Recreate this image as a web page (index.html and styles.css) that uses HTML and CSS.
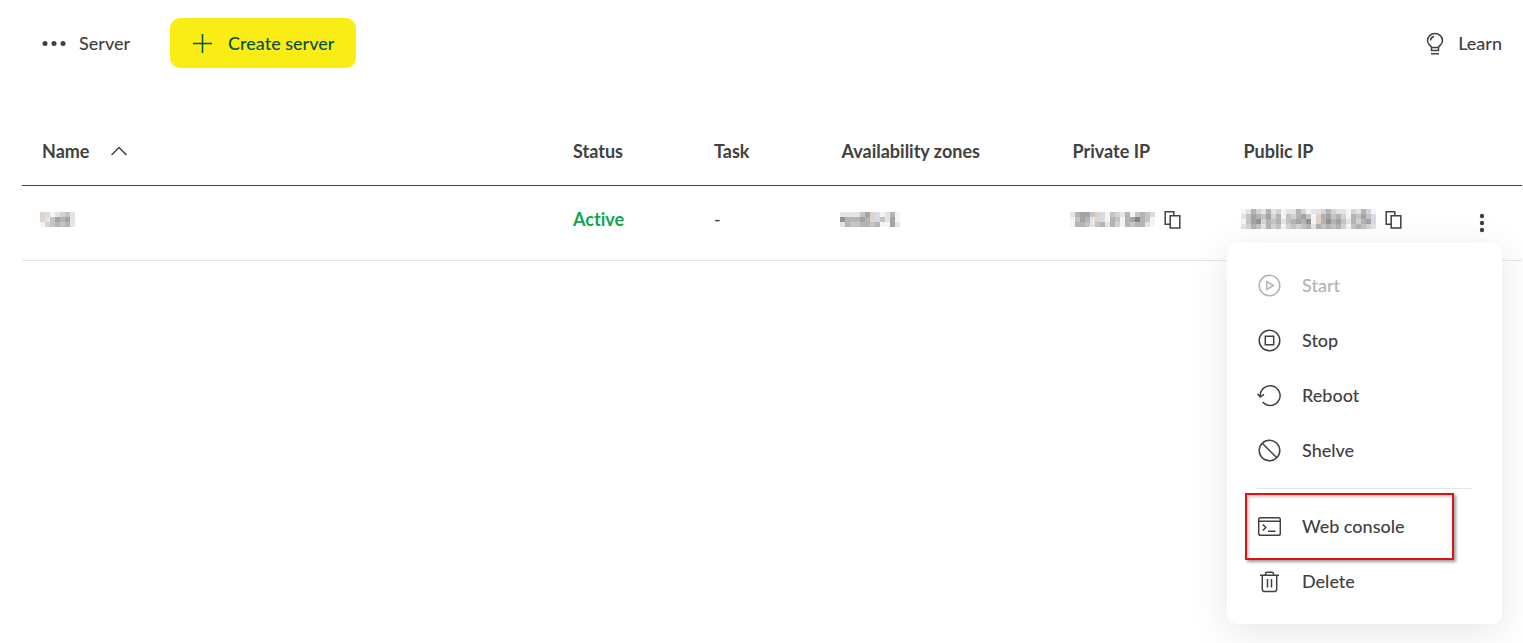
FILE: index.html
```html
<!DOCTYPE html>
<html lang="en">
<head>
	<meta charset="UTF-8">
	<title>Server</title>
	<link rel="stylesheet" href="styles.css">
</head>
<body>
	<header class="toolbar">
		<button type="button" class="crumb">
			<svg class="icon" width="24" height="24" viewBox="0 0 24 24"><g fill="currentColor" stroke="none"><circle cx="3" cy="12.500" r="2.5"/><circle cx="12" cy="12.500" r="2.5"/><circle cx="21" cy="12.500" r="2.5"/></g></svg>
			Server
		</button>
		<button type="button" class="create">
			<svg class="icon" width="20" height="20" viewBox="0 0 20 20"><path d="M10.5 1v19M1 10.5h19"/></svg>
			Create server
		</button>
		<a href="#" class="learn">
			<svg class="icon" width="18" height="24" viewBox="0 0 18 24"><path d="M5.500 17.500V16.500C5 14.500 1.500 13.500 1.500 9.700a7.500 7.200 0 0 1 15 0c0 3.800-3.500 4.800-4 6.800V19.500h-7V16.500h7M5 22.700h8M4.500 9.500a4.500 4.500 0 0 1 3.500-4"/></svg>
			Learn
		</a>
	</header>

	<table class="servers">
		<colgroup>
			<col class="col-name">
			<col class="col-status">
			<col class="col-task">
			<col class="col-zone">
			<col class="col-private">
			<col class="col-public">
			<col class="col-actions">
		</colgroup>
		<thead>
			<tr>
				<th><span class="sort">Name <svg class="icon" width="16" height="10" viewBox="0 0 16 10"><path d="M.5 9L8 1.500 15.500 9"/></svg></span></th>
				<th>Status</th>
				<th>Task</th>
				<th>Availability zones</th>
				<th>Private IP</th>
				<th>Public IP</th>
				<th></th>
			</tr>
		</thead>
		<tbody>
			<tr>
				<td><div class="value"><svg class="mosaic" data-rows="oufedce|oecabae|fdcbcbe"></svg></div></td>
				<td class="active">Active</td>
				<td>-</td>
				<td><div class="value"><svg class="mosaic" data-rows="eeeecaoufebf|9bbbabouceaf|ebccbbcbffae"></svg></div></td>
				<td>
					<div class="value">
						<svg class="mosaic" data-rows="ebaacoufcdebfcbcu|fcabeoufbcfba8bcf|fbbcecbebdfbcbbef"></svg>
						<button type="button" class="copy" aria-label="Copy private IP"><svg class="icon" width="18" height="20" viewBox="0 0 18 20"><path d="M6.500 15.300H2.200V2.700H10.800V6.500M7.200 6.700h9.600v12.300H7.200z"/></svg></button>
					</div>
				</td>
				<td>
					<div class="value">
						<svg class="mosaic" data-rows="febdebedfeebdfeedbdeefdebdf|ecabcadbfcdbacfobacbdfbcacu|fca9dbcbecbab9fob9bacebdbau|edbcebdcfdcdcbebcbcbdfcbcde"></svg>
						<button type="button" class="copy" aria-label="Copy public IP"><svg class="icon" width="18" height="20" viewBox="0 0 18 20"><path d="M6.500 15.300H2.200V2.700H10.800V6.500M7.200 6.700h9.600v12.300H7.200z"/></svg></button>
					</div>
				</td>
				<td class="actions">
					<button type="button" class="more" aria-label="Actions">
						<svg class="icon" width="6" height="20" viewBox="0 0 6 20"><g fill="currentColor" stroke="none"><circle cx="3" cy="3" r="2.200"/><circle cx="3" cy="10" r="2.200"/><circle cx="3" cy="17" r="2.200"/></g></svg>
					</button>
					<div class="menu">
						<button type="button" class="item" disabled>
							<svg class="icon" width="24" height="24" viewBox="0 0 24 24"><circle cx="12.500" cy="12.500" r="10.300"/><path d="M9.800 8.500v8l6.500-4z"/></svg>
							Start
						</button>
						<button type="button" class="item">
							<svg class="icon" width="24" height="24" viewBox="0 0 24 24"><circle cx="12.500" cy="12.500" r="10.300"/><path d="M8.300 8.300h8.400v8.400H8.300z"/></svg>
							Stop
						</button>
						<button type="button" class="item">
							<svg class="icon" width="24" height="24" viewBox="0 0 24 24"><path d="M3.300 13.500a9.900 9.900 0 1 1 2.400 5.600M.5 10.800l2.800 3.200 3.700-2.600"/></svg>
							Reboot
						</button>
						<button type="button" class="item">
							<svg class="icon" width="24" height="24" viewBox="0 0 24 24"><circle cx="12.500" cy="12.500" r="10.300"/><path d="M5.200 5.200l14.600 14.600"/></svg>
							Shelve
						</button>
						<hr class="divider">
						<button type="button" class="item marked">
							<svg class="icon" width="24" height="24" viewBox="0 0 24 24"><rect x="1.700" y="3.700" width="21.600" height="17.600" rx="1.800"/><path d="M2 7.300h21M5.800 10.500l3 3-3 3M11 17.300h7.500"/></svg>
							Web console
						</button>
						<button type="button" class="item">
							<svg class="icon" width="24" height="24" viewBox="0 0 24 24"><path d="M3 6.200h19M8.500 6V4.800q0-1.600 1.600-1.600h4.800q1.600 0 1.600 1.600v1.200M5.300 6.200v13.700q0 2.600 2.600 2.600h9.200q2.600 0 2.600-2.600v-13.700M10.500 10v8.500M14.500 10v8.500"/></svg>
							Delete
						</button>
					</div>
				</td>
			</tr>
		</tbody>
	</table>

	<script src="mosaic.js"></script>
</body>
</html>
```
FILE: styles.css
```css
* {
	box-sizing: border-box;
}
body {
	min-height: 100vh;
	margin: 0;
	padding: 18px 1px 0 22px;
	background: #fff;
	color: #414141;
	font: 500 18px/24px Lato, "Liberation Sans", sans-serif;
	font-variant-ligatures: none;
}
button {
	padding: 0;
	border: none;
	background: none;
	color: inherit;
	font: inherit;
	font-variant-ligatures: none;
	cursor: pointer;
}
.icon {
	flex: none;
	fill: none;
	stroke: currentColor;
	stroke-width: 1.5;
}
.toolbar {
	display: flex;
	align-items: center;
	padding: 0 20px;
}
.crumb {
	display: flex;
	align-items: center;
	gap: 13px;
	margin-right: 40px;
}
.create {
	display: flex;
	align-items: center;
	gap: 16px;
	height: 50px;
	padding: 0 22px;
	border-radius: 10px;
	background: #faed16;
	color: #06523f;
}
.learn {
	display: flex;
	align-items: center;
	gap: 14px;
	margin-left: auto;
	color: inherit;
	text-decoration: none;
}
.servers {
	width: 100%;
	margin-top: 48px;
	border-collapse: separate;
	border-spacing: 0;
	table-layout: fixed;
	text-align: left;
}
.col-name {
	width: 35.4%;
}
.col-status {
	width: 9.4%;
}
.col-task {
	width: 8.5%;
}
.col-zone {
	width: 15.4%;
}
.col-private {
	width: 11.4%;
}
.col-public {
	width: 15.9%;
}
.col-actions {
	width: 4%;
}
.servers th {
	padding: 23px 0 22px 20px;
	border-bottom: 1px solid #414141;
	font-weight: 700;
	white-space: nowrap;
}
.servers td {
	padding: 21px 0 21px 20px;
	border-bottom: 1px solid #e6e6e6;
	vertical-align: top;
}
.sort {
	display: flex;
	align-items: center;
	gap: 22px;
}
.servers .active {
	color: #0ca84f;
	font-weight: 700;
}
.value {
	display: flex;
	align-items: center;
	gap: 8px;
	height: 24px;
	margin-left: -2px;
}
.mosaic {
	flex: none;
	shape-rendering: crispEdges;
}
.copy {
	display: flex;
}
.servers .actions {
	position: relative;
	padding-left: 17px;
}
.more {
	display: flex;
	align-items: center;
	height: 32px;
}
.menu {
	position: absolute;
	top: 57px;
	right: 20px;
	width: 275px;
	padding: 14px 30px 16px;
	border-radius: 10px;
	background: #fff;
	box-shadow: 0 8px 40px rgba(0, 0, 0, .1);
}
.item {
	position: relative;
	display: flex;
	align-items: center;
	gap: 21px;
	width: 100%;
	height: 55px;
}
.item:disabled {
	color: #b3b3b3;
	cursor: default;
}
.divider {
	height: 1px;
	margin: 11px 0 9px;
	border: none;
	background: #e6e6e6;
}
/* red frame around the highlighted entry */
.marked::after {
	content: "";
	position: absolute;
	inset: -5px 18px -7px -12px;
	border: 2px solid #dc1414;
	box-shadow: 2px 2px 3px rgba(0, 0, 0, .4), inset 2px 2px 3px rgba(0, 0, 0, .2);
}
```
FILE: mosaic.js
```js
// hidden values: one character per 5px cell, hex digit = grey level, o/u = warm/blue tint
var size = 5;
var tints = { o: '#e0d4ca', u: '#d3dce8' };

document.querySelectorAll('.mosaic').forEach(function(svg) {
	var rows = svg.dataset.rows.split('|');
	svg.setAttribute('width', rows[0].length * size);
	svg.setAttribute('height', rows.length * size);
	rows.forEach(function(row, y) {
		row.split('').forEach(function(c, x) {
			var rect = document.createElementNS('http://www.w3.org/2000/svg', 'rect');
			rect.setAttribute('x', x * size);
			rect.setAttribute('y', y * size);
			rect.setAttribute('width', size);
			rect.setAttribute('height', size);
			rect.setAttribute('fill', tints[c] || '#' + c + '4' + c + '4' + c + '4');
			svg.appendChild(rect);
		});
	});
});
```
